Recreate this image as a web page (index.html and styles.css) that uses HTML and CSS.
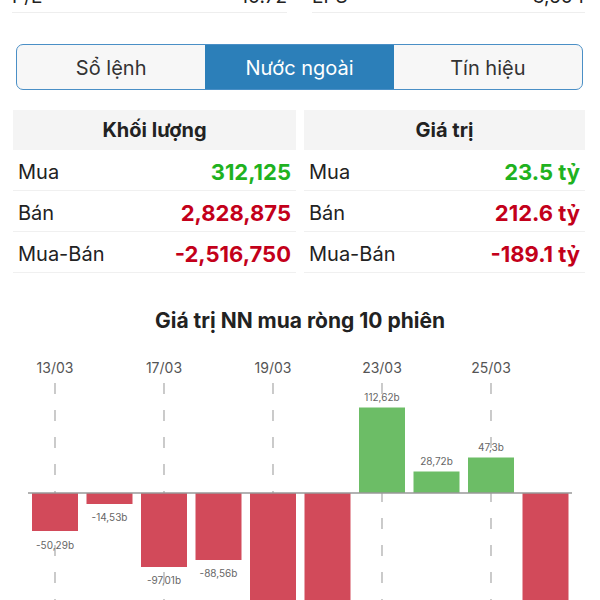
FILE: index.html
```html
<!DOCTYPE html>
<html lang="vi">
<head>
    <meta charset="UTF-8">
    <meta name="viewport" content="width=device-width, initial-scale=1.0">
    <title>Nước ngoài</title>
    <link rel="stylesheet" href="styles.css">
</head>
<body>
    <div class="summary-row">
        <div class="summary-cell"><span>P/E</span><span>10.72</span></div>
        <div class="summary-cell"><span>EPS</span><span>3,504</span></div>
    </div>

    <div class="segments">
        <div class="segment">Sổ lệnh</div>
        <div class="segment active">Nước ngoài</div>
        <div class="segment">Tín hiệu</div>
    </div>

    <div class="stats">
        <div class="stat-table">
            <div class="stat-head">Khối lượng</div>
            <div class="stat-row"><span>Mua</span><span class="up">312,125</span></div>
            <div class="stat-row"><span>Bán</span><span class="down">2,828,875</span></div>
            <div class="stat-row"><span>Mua-Bán</span><span class="down">-2,516,750</span></div>
        </div>
        <div class="stat-table">
            <div class="stat-head">Giá trị</div>
            <div class="stat-row"><span>Mua</span><span class="up">23.5 tỷ</span></div>
            <div class="stat-row"><span>Bán</span><span class="down">212.6 tỷ</span></div>
            <div class="stat-row"><span>Mua-Bán</span><span class="down">-189.1 tỷ</span></div>
        </div>
    </div>

    <h2 class="chart-title">Giá trị NN mua ròng 10 phiên</h2>

    <!-- net foreign buy value, last 10 sessions -->
    <svg class="chart" viewBox="0 334 600 266" width="600" height="266">
        <g class="grid">
            <line x1="55" y1="383" x2="55" y2="600"/>
            <line x1="164" y1="383" x2="164" y2="600"/>
            <line x1="273" y1="383" x2="273" y2="600"/>
            <line x1="382" y1="383" x2="382" y2="600"/>
            <line x1="491" y1="383" x2="491" y2="600"/>
        </g>
        <g class="dates">
            <text x="55" y="373">13/03</text>
            <text x="164" y="373">17/03</text>
            <text x="273" y="373">19/03</text>
            <text x="382" y="373">23/03</text>
            <text x="491" y="373">25/03</text>
        </g>
        <g class="bars-neg">
            <rect x="32" y="493" width="46" height="38"/>
            <rect x="86.5" y="493" width="46" height="11"/>
            <rect x="141" y="493" width="46" height="74"/>
            <rect x="195.5" y="493" width="46" height="67"/>
            <rect x="250" y="493" width="46" height="120"/>
            <rect x="304.5" y="493" width="46" height="120"/>
            <rect x="522.5" y="493" width="46" height="120"/>
        </g>
        <g class="bars-pos">
            <rect x="359" y="407.5" width="46" height="85.5"/>
            <rect x="413.5" y="471.5" width="46" height="21.5"/>
            <rect x="468" y="457.5" width="46" height="35.5"/>
        </g>
        <line class="axis" x1="28" y1="493" x2="572" y2="493"/>
        <g class="values">
            <text x="55" y="545">-50,29b</text>
            <text x="109.5" y="517">-14,53b</text>
            <text x="164" y="580">-97,01b</text>
            <text x="218.5" y="573">-88,56b</text>
            <text x="382" y="397">112,62b</text>
            <text x="436.5" y="461">28,72b</text>
            <text x="491" y="447">47,3b</text>
        </g>
    </svg>
</body>
</html>
```

FILE: styles.css
```css
html, body {
    overflow: hidden;
}
body {
    margin: 0;
    width: 600px;
    height: 600px;
    font-family: Inter, "Noto Sans", sans-serif;
    color: #222;
    background-color: #fff;
}
.summary-row {
    display: grid;
    grid-template-columns: 275px 273px;
    column-gap: 25px;
    padding: 0 15px 0 12px;
    margin-top: -23px;
}
.summary-cell {
    display: flex;
    justify-content: space-between;
    height: 35px;
    line-height: 40px;
    font-size: 19px;
    border-bottom: 1px solid #eee;
}
.segments {
    box-sizing: border-box;
    display: grid;
    grid-template-columns: repeat(3, 1fr);
    margin: 31px 0 0 16px;
    width: 567px;
    height: 46px;
    border: 1.5px solid #4a8fc6;
    border-radius: 7px;
    overflow: hidden;
    background-color: #f7f7f7;
}
.segment {
    display: flex;
    align-items: center;
    justify-content: center;
    padding-top: 2px;
    font-size: 20px;
    color: #333;
}
.segment.active {
    background-color: #2c7fb9;
    color: #fff;
}
.stats {
    display: grid;
    grid-template-columns: 283px 281px;
    column-gap: 8px;
    margin: 20px 15px 0 13px;
}
.stat-head {
    height: 40px;
    line-height: 40px;
    text-align: center;
    font-size: 20px;
    font-weight: 700;
    background-color: #f4f4f4;
}
.stat-row {
    box-sizing: border-box;
    display: flex;
    justify-content: space-between;
    align-items: center;
    height: 41px;
    padding: 4px 5px 0 5px;
    font-size: 20px;
    border-bottom: 1px solid #f0f0f0;
}
.up {
    color: #1fb21f;
    font-size: 22px;
    font-weight: 700;
}
.down {
    color: #c3001a;
    font-size: 22px;
    font-weight: 700;
}
.chart-title {
    margin: 35px 0 0 0;
    height: 26px;
    line-height: 26px;
    text-align: center;
    font-size: 21px;
    font-weight: 700;
    color: #222;
}
.chart {
    display: block;
}
.grid line {
    stroke: #a8a8a8;
    stroke-width: 1.2;
    stroke-dasharray: 11 16;
}
.dates text {
    font-family: Inter, sans-serif;
    font-size: 14px;
    fill: #555;
    text-anchor: middle;
}
.bars-neg rect {
    fill: #d24a5a;
}
.bars-pos rect {
    fill: #6cbd66;
}
.axis {
    stroke: #999;
    stroke-width: 1.5;
}
.values text {
    font-family: Inter, sans-serif;
    font-size: 10px;
    fill: #666;
    text-anchor: middle;
    dominant-baseline: central;
}
```
